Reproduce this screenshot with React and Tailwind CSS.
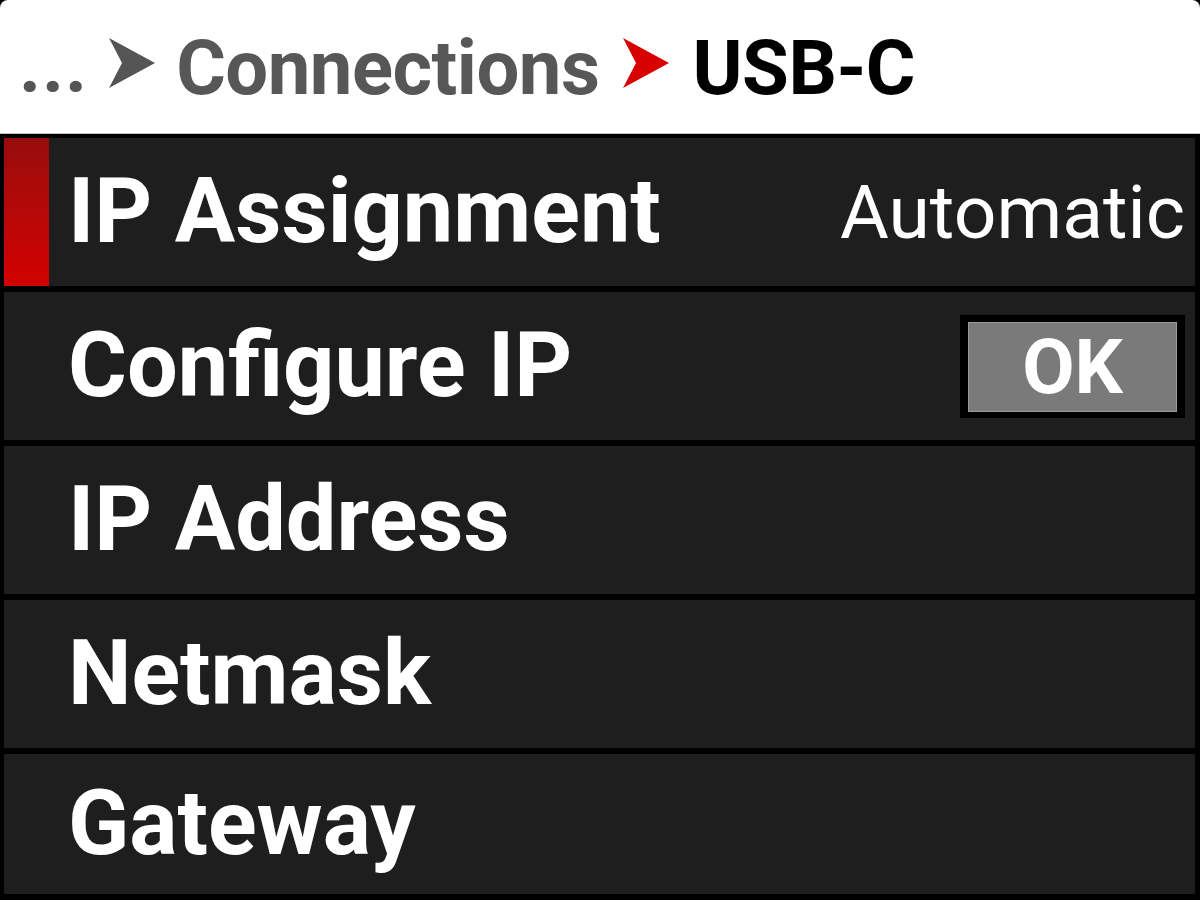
import React from "react";

function Arrow({ color, className }) {
  return (
    <svg width="48" height="50" viewBox="0 0 48 50" className={"shrink-0 " + className}>
      <path d="M1 0 L47 25 L1 50 L14 25 Z" fill={color} />
    </svg>
  );
}

function Row({ label, selected, right, last }) {
  return (
    <div
      className={
        "flex items-center bg-[#1e1e1e] " + (last ? "flex-1" : "h-[148px] shrink-0")
      }
    >
      <div
        className={
          "self-stretch w-[45px] shrink-0 " +
          (selected ? "bg-gradient-to-b from-[#980c0c] to-[#d40000]" : "")
        }
      />
      <div className="flex-1 pl-[19px] text-white font-bold text-[90px] leading-none">
        {label}
      </div>
      {right}
    </div>
  );
}

export default function App() {
  return (
    <div
      className="w-[1200px] h-[900px] bg-black overflow-hidden flex flex-col"
      style={{ fontFamily: "Roboto, 'Noto Sans', sans-serif" }}
    >
      <div className="h-[134px] shrink-0 bg-white rounded-t-[8px] border-b border-[#c4c4c4] flex items-center pl-[19px] pt-[2px]">
        <span className="text-[76px] font-bold text-[#555555] leading-none tracking-[1px] mt-[-6px]">
          ...
        </span>
        <Arrow color="#555555" className="ml-[20px] mt-[-10px]" />
        <span className="ml-[20px] text-[76px] font-bold text-[#575757] leading-none tracking-[-0.5px]">
          Connections
        </span>
        <Arrow color="#d80000" className="ml-[23px] mt-[-10px]" />
        <span className="ml-[22px] text-[76px] font-bold text-black leading-none tracking-[-0.5px]">
          USB-C
        </span>
      </div>
      <div className="flex-1 flex flex-col gap-[6px] pl-[4px] pr-[5px] pt-[4px] pb-[6px]">
        <Row
          label="IP Assignment"
          selected
          right={
            <div className="pr-[10px] text-white text-[75px] leading-none">
              Automatic
            </div>
          }
        />
        <Row
          label="Configure IP"
          right={
            <div className="mr-[10px] bg-black px-[8px] pt-[7px] pb-[6px]">
              <div className="w-[209px] h-[90px] bg-[#7a7a7a] border border-[#9a9a9a] flex items-center justify-center text-white font-bold text-[76px] leading-none">
                OK
              </div>
            </div>
          }
        />
        <Row label="IP Address" />
        <Row label="Netmask" />
        <Row label="Gateway" last />
      </div>
    </div>
  );
}
